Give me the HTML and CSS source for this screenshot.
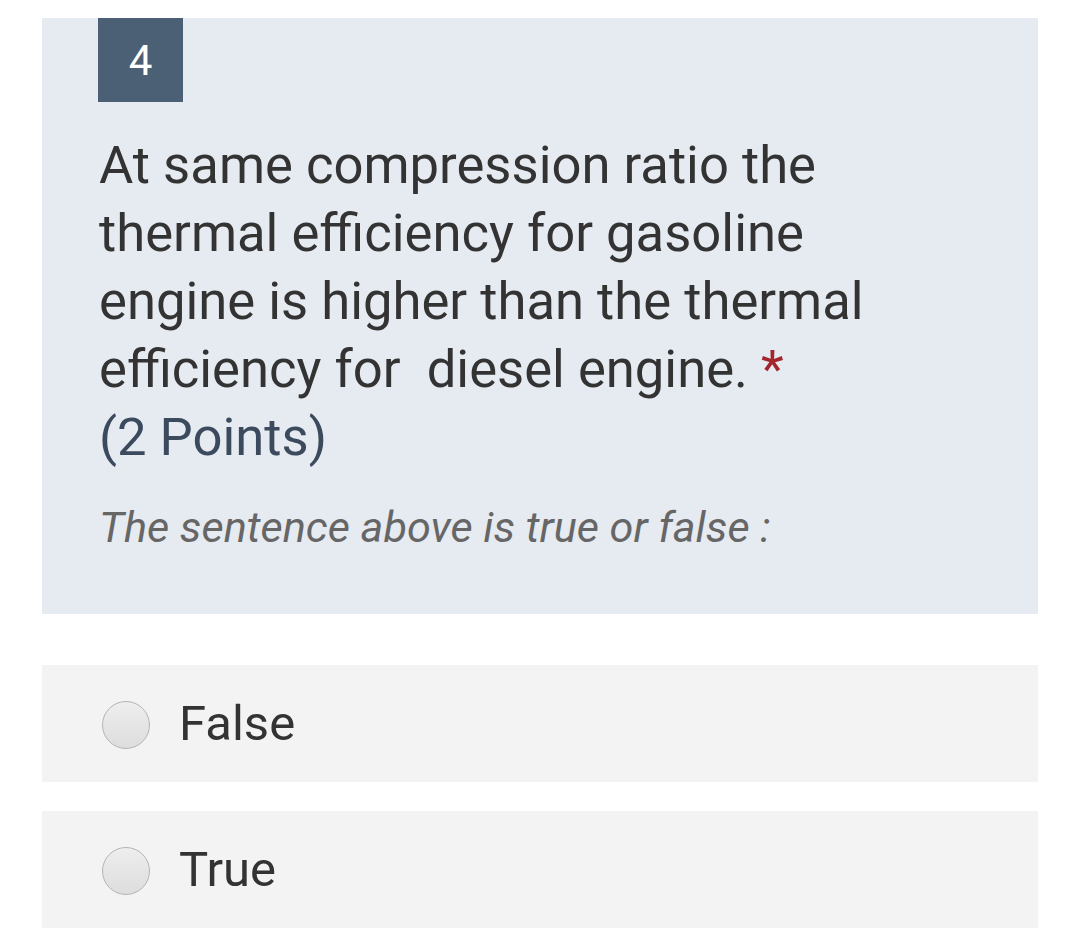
FILE: index.html
```html
<!DOCTYPE html>
<html>
<head>
<meta charset="utf-8">
<link rel="stylesheet" href="styles.css">
</head>
<body>
<div class="page">
  <div class="question">
    <div class="badge">4</div>
    <div class="title">At same compression ratio the thermal efficiency for gasoline engine is higher than the thermal efficiency for&nbsp; diesel engine. <span class="req">*</span><br><span class="points">(2 Points)</span></div>
    <div class="sub">The sentence above is true or false :</div>
  </div>
  <div class="options">
    <div class="option"><span class="radio"></span><span class="label">False</span></div>
    <div class="option"><span class="radio"></span><span class="label">True</span></div>
  </div>
</div>
</body>
</html>
```
FILE: styles.css
```css
html, body {
  margin: 0;
  padding: 0;
  background: #ffffff;
}
body {
  font-family: Roboto, "Noto Sans", sans-serif;
  color: #333333;
}
.page {
  width: 996px;
  margin-left: 42px;
  padding-top: 18px;
}
.question {
  background: #e6eaf1;
  padding: 0 56px 56px 56px;
}
.badge {
  width: 85px;
  height: 84px;
  background: #4b6075;
  color: #ffffff;
  font-size: 42px;
  display: flex;
  align-items: center;
  justify-content: center;
}
.title {
  margin-top: 29px;
  font-size: 52.6px;
  line-height: 68px;
  color: #333333;
  padding-left: 1px;
  width: 830px;
}
.req {
  color: #a4262c;
}
.points {
  color: #3b4a5c;
}
.sub {
  margin-top: 27px;
  font-size: 43.2px;
  line-height: 60px;
  font-style: italic;
  color: #666666;
  padding-left: 1px;
}
.options {
  margin-top: 51px;
  display: flex;
  flex-direction: column;
  gap: 29px;
}
.option {
  height: 117px;
  background: #f3f3f3;
  display: flex;
  align-items: center;
  padding-left: 60px;
}
.radio {
  width: 48px;
  height: 48px;
  border-radius: 50%;
  border: 1px solid #b5b5b5;
  background: linear-gradient(#eeeeee, #dddddd);
  box-sizing: border-box;
  margin-right: 29px;
  margin-top: 2px;
}
.label {
  font-size: 49px;
  color: #333333;
}
```
